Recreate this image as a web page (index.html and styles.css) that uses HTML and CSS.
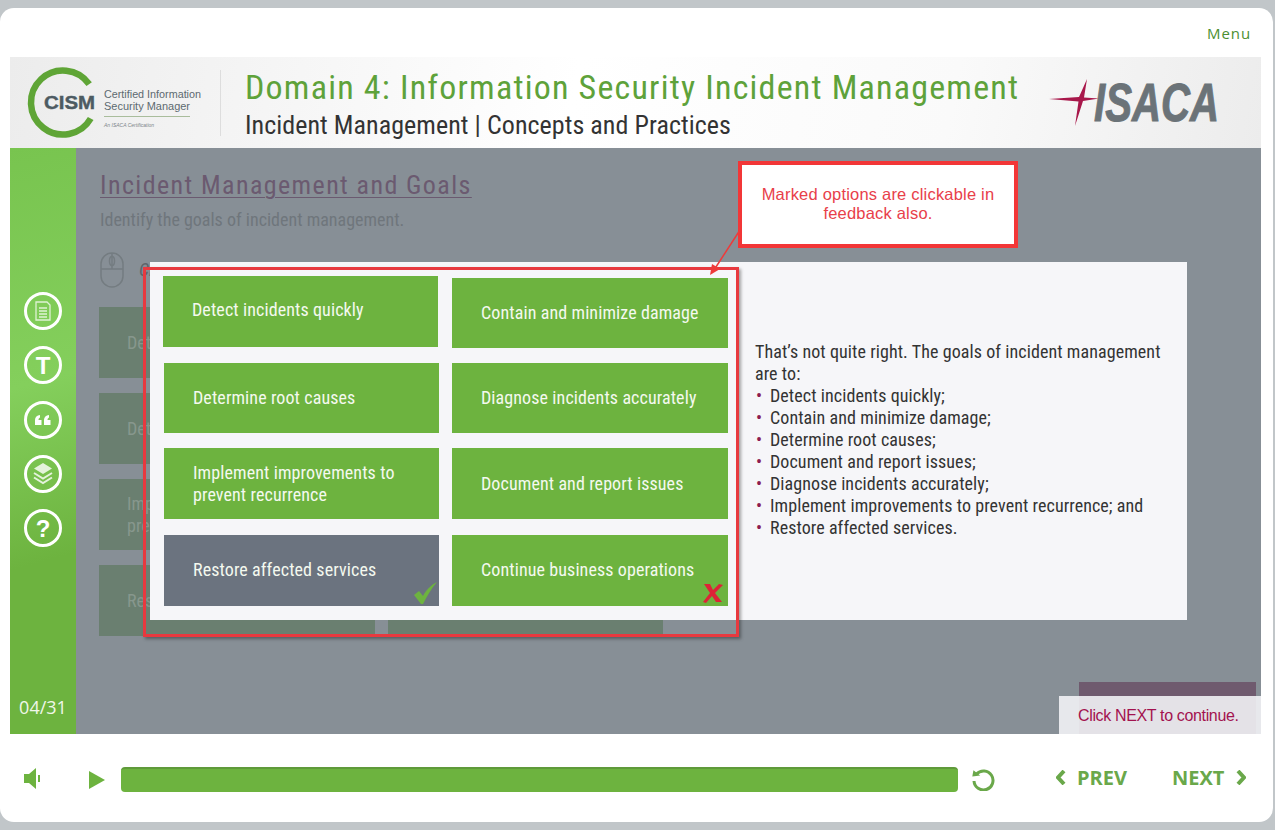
FILE: index.html
```html
<!DOCTYPE html>
<html lang="en">
<head>
    <meta charset="UTF-8">
    <title>Incident Management and Goals</title>
    <link rel="stylesheet" href="styles.css">
</head>
<body>

<div class="player">
    <div class="menu-row"><a class="menu-link">Menu</a></div>

    <header class="banner">
        <svg class="cism-logo" width="184" height="76" viewBox="0 0 184 76">
            <path d="M63.2 19.2 A32 32 0 1 0 64.7 53.5" fill="none" stroke="#5fa536" stroke-width="6.500"/>
            <text x="18" y="43.5" class="cism-mark" textLength="51" lengthAdjust="spacingAndGlyphs">CISM</text>
            <text x="78" y="32.5" class="cism-line" textLength="97" lengthAdjust="spacingAndGlyphs">Certified Information</text>
            <text x="78" y="44.5" class="cism-line" textLength="86" lengthAdjust="spacingAndGlyphs">Security Manager</text>
            <line x1="78" y1="51.500" x2="164" y2="51.500" stroke="#a9bd9c" stroke-width="1"/>
            <text x="78" y="62" class="cism-small">An ISACA Certification</text>
        </svg>
        <div class="banner-divider"></div>
        <div class="banner-titles">
            <div class="domain-title">Domain 4: Information Security Incident Management</div>
            <div class="topic-title">Incident Management | Concepts and Practices</div>
        </div>
        <svg class="isaca-logo" width="212" height="52" viewBox="0 0 212 52">
            <path d="M0 22 L30 20 L38 2 L35 20.500 L50 21.500 L34 24 L26 49 L29.500 24.500 Z" fill="#a8174a"/>
            <text x="45" y="44" class="isaca-text" textLength="125" lengthAdjust="spacingAndGlyphs">ISACA</text>
        </svg>
    </header>

    <section class="slide">
        <aside class="sidebar">
            <div class="side-icons">
                <svg class="side-icon" viewBox="0 0 40 40">
                    <circle cx="20" cy="20" r="17.5" class="ring"/>
                    <path d="M13 11 H24 L27 14 V29 H13 Z M16 17 H24 M16 20 H24 M16 23 H24 M16 26 H24" fill="none" stroke="#fff" stroke-width="1.3" opacity="0.75"/>
                </svg>
                <svg class="side-icon" viewBox="0 0 40 40">
                    <circle cx="20" cy="20" r="17.5" class="ring"/>
                    <text x="20" y="28.500" class="side-letter">T</text>
                </svg>
                <svg class="side-icon" viewBox="0 0 40 40">
                    <circle cx="20" cy="20" r="17.5" class="ring"/>
                    <path d="M12 25 V20 C12 17 14 15.500 17 15 V17.500 C16 18 15.500 18.500 15.500 20 H18.500 V25 Z M21 25 V20 C21 17 23 15.500 26 15 V17.500 C25 18 24.500 18.500 24.500 20 H27.500 V25 Z" fill="#fff"/>
                </svg>
                <svg class="side-icon" viewBox="0 0 40 40">
                    <circle cx="20" cy="20" r="17.5" class="ring"/>
                    <path d="M20 9 L29 14.500 L20 20 L11 14.500 Z" fill="#fff" opacity="0.8"/>
                    <path d="M11 19 L20 24.500 L29 19 M11 23.500 L20 29 L29 23.500" fill="none" stroke="#fff" stroke-width="2" opacity="0.8"/>
                </svg>
                <svg class="side-icon" viewBox="0 0 40 40">
                    <circle cx="20" cy="20" r="17.5" class="ring"/>
                    <text x="20" y="28.500" class="side-letter">?</text>
                </svg>
            </div>
            <div class="page-count">04/31</div>
        </aside>

        <main class="content">
            <h1 class="slide-title">Incident Management and Goals</h1>
            <p class="slide-desc">Identify the goals of incident management.</p>
            <div class="instruction">
                <svg width="26" height="38" viewBox="0 0 26 38">
                    <rect x="2" y="2" width="22" height="34" rx="11" fill="none" stroke="#747c81" stroke-width="1.500"/>
                    <path d="M2 18 H24 M13 2 V18" fill="none" stroke="#747c81" stroke-width="1.500"/>
                    <ellipse cx="13" cy="10" rx="2.500" ry="4.500" fill="none" stroke="#747c81" stroke-width="1.500"/>
                </svg>
                <span class="instruction-text">Click all that apply.</span>
            </div>
            <div class="dim-grid">
                <div class="dim-tile">Detect incidents quickly</div>
                <div class="dim-tile"></div>
                <div class="dim-tile">Determine root causes</div>
                <div class="dim-tile"></div>
                <div class="dim-tile">Implement improvements to prevent recurrence</div>
                <div class="dim-tile"></div>
                <div class="dim-tile">Restore affected services</div>
                <div class="dim-tile"></div>
            </div>
            <div class="submit-btn"></div>
        </main>

        <div class="feedback-panel">
            <div class="tile-grid">
                <div class="tile tile-first">Detect incidents quickly</div>
                <div class="tile">Contain and minimize damage</div>
                <div class="tile">Determine root causes</div>
                <div class="tile">Diagnose incidents accurately</div>
                <div class="tile">Implement improvements to prevent recurrence</div>
                <div class="tile">Document and report issues</div>
                <div class="tile tile-last tile-correct">Restore affected services
                    <svg class="mark mark-tick" width="26" height="24" viewBox="0 0 26 24">
                        <path d="M2 14 L7 10 L11 15 C14 9 19 4 25 1 C19 8 15 15 11 23 H9 Z" fill="#6db33f"/>
                    </svg>
                </div>
                <div class="tile tile-last">Continue business operations
                    <svg class="mark mark-cross" width="22" height="22" viewBox="0 0 22 22">
                        <path d="M2 2 L8 2 L11 8 L17 2 L21 3 L13 11 L20 20 L14 20 L10 14 L4 21 L1 20 L8 11 Z" fill="#dd2337"/>
                    </svg>
                </div>
            </div>
            <div class="feedback-text">
                <p>That’s not quite right. The goals of incident management are to:</p>
                <ul>
                    <li>Detect incidents quickly;</li>
                    <li>Contain and minimize damage;</li>
                    <li>Determine root causes;</li>
                    <li>Document and report issues;</li>
                    <li>Diagnose incidents accurately;</li>
                    <li>Implement improvements to prevent recurrence; and</li>
                    <li>Restore affected services.</li>
                </ul>
            </div>
        </div>

        <div class="red-frame"></div>
        <div class="note-box">Marked options are clickable in feedback also.</div>
        <svg class="note-arrow" width="34" height="48" viewBox="0 0 34 48">
            <path d="M31 2 L5 42" stroke="#ee3a3a" stroke-width="1.500" fill="none"/>
            <path d="M1 47 L3 36 L11 41 Z" fill="#ee3a3a"/>
        </svg>
        <div class="next-hint">Click NEXT to continue.</div>
    </section>

    <footer class="controls">
        <svg class="ctl-speaker" width="17" height="21" viewBox="0 0 17 21">
            <path d="M0 6 H5 L12 0 V21 L5 15 H0 Z" fill="#6db33f"/>
            <rect x="14" y="7" width="2" height="7" fill="#6db33f"/>
        </svg>
        <svg class="ctl-play" width="16" height="18" viewBox="0 0 16 18">
            <path d="M0 0 L16 9 L0 18 Z" fill="#6db33f"/>
        </svg>
        <div class="progress"></div>
        <svg class="ctl-replay" width="24" height="24" viewBox="0 0 24 24">
            <path d="M5.500 7 A9.500 9.500 0 1 1 3 14" fill="none" stroke="#6aa84a" stroke-width="3"/>
            <path d="M1 9 L9 9 L3 3 Z" fill="#6aa84a" transform="rotate(-8 5 7)"/>
        </svg>
        <a class="nav-btn nav-prev">
            <svg width="11" height="15" viewBox="0 0 11 15"><path d="M8 1 L2 7.500 L8 14" fill="none" stroke="#6aa84a" stroke-width="4"/></svg>
            PREV
        </a>
        <a class="nav-btn nav-next">
            NEXT
            <svg width="11" height="15" viewBox="0 0 11 15"><path d="M3 1 L9 7.500 L3 14" fill="none" stroke="#6aa84a" stroke-width="4"/></svg>
        </a>
    </footer>
</div>

</body>
</html>
```

FILE: styles.css
```css
body {
    margin: 0;
    background-color: #c1c6c9;
    font-family: Roboto, "Liberation Sans", Arial, sans-serif;
    font-stretch: 75%;
    overflow: hidden;
}
.player {
    width: 1273px;
    height: 814px;
    margin-top: 8px;
    padding: 0 12px 0 10px;
    box-sizing: border-box;
    background-color: white;
    border-radius: 14px;
}
.menu-row {
    height: 49px;
    display: flex;
    justify-content: flex-end;
    align-items: flex-start;
    padding: 13px 10px 0 0;
    box-sizing: border-box;
}
.menu-link {
    font-family: "Open Sans", sans-serif;
    font-stretch: 100%;
    font-size: 15px;
    letter-spacing: 0.9px;
    color: #4c8f31;
    line-height: 24px;
}

/* banner */
.banner {
    height: 91px;
    display: flex;
    align-items: center;
    background: linear-gradient(100deg, #ececec 0%, #f3f3f3 16%, #ffffff 45%, #fafafa 75%, #ececec 100%);
}
.cism-logo {
    margin-left: 16px;
    flex-shrink: 0;
}
.cism-mark {
    font-family: "Liberation Sans", sans-serif;
    font-weight: bold;
    font-size: 18px;
    fill: #4d5b62;
    stroke: #4d5b62;
    stroke-width: 0.4;
}
.cism-line {
    font-family: "Liberation Sans", sans-serif;
    font-size: 11px;
    fill: #5d6a70;
}
.cism-small {
    font-family: "Liberation Sans", sans-serif;
    font-style: italic;
    font-size: 5px;
    fill: #7b8488;
}
.banner-divider {
    width: 1px;
    height: 66px;
    background-color: #dddddd;
    margin-left: 10px;
}
.banner-titles {
    margin-left: 24px;
    width: 795px;
    padding-top: 4px;
    flex-shrink: 0;
}
.domain-title {
    font-size: 34px;
    letter-spacing: 1.2px;
    color: #5ea23a;
    line-height: 38px;
    white-space: nowrap;
}
.topic-title {
    margin-top: 2px;
    font-size: 26px;
    color: #333333;
    line-height: 34px;
    letter-spacing: 0.05px;
    white-space: nowrap;
}
.isaca-logo {
    flex-shrink: 0;
    margin: 0 -36px 0 9px;
}
.isaca-text {
    font-family: "Liberation Sans", sans-serif;
    font-weight: bold;
    font-style: italic;
    font-size: 53px;
    fill: #6b7378;
    stroke: #6b7378;
    stroke-width: 1;
}

/* slide */
.slide {
    position: relative;
    height: 586px;
    display: flex;
    background-color: #878f96;
}
.sidebar {
    width: 66px;
    flex-shrink: 0;
    display: flex;
    flex-direction: column;
    align-items: center;
    background: linear-gradient(165deg, #78c44f 0%, #84cf5c 40%, #6db33f 70%, #6db33f 100%);
}
.side-icons {
    margin-top: 143px;
    display: flex;
    flex-direction: column;
    gap: 14.250px;
}
.side-icon {
    display: block;
    width: 40px;
    height: 40px;
}
.ring {
    fill: none;
    stroke: #ffffff;
    stroke-width: 3;
}
.side-letter {
    font-family: "Liberation Sans", sans-serif;
    font-weight: bold;
    font-size: 24px;
    fill: #ffffff;
    text-anchor: middle;
}
.page-count {
    margin-top: auto;
    margin-bottom: 15px;
    font-family: "Open Sans", sans-serif;
    font-stretch: 100%;
    font-size: 18px;
    line-height: 24px;
    color: #f0f7ea;
}
.content {
    flex: 1;
    display: flex;
    flex-direction: column;
    padding: 21px 0 0 24px;
}
.slide-title {
    margin: 0;
    font-size: 26px;
    font-weight: normal;
    letter-spacing: 1.4px;
    line-height: 32px;
    color: #6b5a70;
    text-decoration: underline;
    text-decoration-thickness: 1px;
    text-underline-offset: 3px;
    align-self: flex-start;
}
.slide-desc {
    margin: 7px 0 0 0;
    font-size: 18px;
    line-height: 24px;
    color: #6f767c;
}
.instruction {
    display: flex;
    align-items: flex-start;
    gap: 14px;
    margin-top: 19px;
    margin-left: -1px;
    height: 38px;
    font-size: 18px;
    font-style: italic;
    color: #5d646a;
}
.instruction-text {
    margin-top: 8px;
}
.dim-grid {
    display: grid;
    grid-template-columns: 276px 275px;
    grid-auto-rows: 71px;
    column-gap: 13px;
    row-gap: 15px;
    margin-top: 18px;
    margin-left: -1px;
}
.dim-tile {
    display: flex;
    align-items: center;
    padding-left: 28px;
    padding-right: 40px;
    font-size: 18px;
    line-height: 22px;
    color: #87978d;
    background-color: #6a7f70;
}
.submit-btn {
    margin-top: auto;
    align-self: flex-end;
    margin-right: 5px;
    width: 177px;
    height: 52px;
    background-color: #6f5a6e;
}

/* feedback laid over the slide */
.feedback-panel {
    position: absolute;
    left: 140px;
    top: 114px;
    width: 1037px;
    height: 358px;
    display: flex;
    background-color: #f6f6f9;
}
.tile-grid {
    display: grid;
    grid-template-columns: 275px 276px;
    grid-template-rows: 70px 70px 71px 72px;
    column-gap: 13px;
    row-gap: 15px;
    padding: 16px 0 0 14px;
}
.tile {
    position: relative;
    display: flex;
    align-items: center;
    padding: 0 8px 0 29px;
    font-size: 18px;
    line-height: 22px;
    letter-spacing: 0.1px;
    color: #f4f9ef;
    background-color: #6db33f;
}
.tile-first {
    margin: -2px 1px 1px -1px;
    padding-bottom: 3px;
}
.tile-last {
    margin-top: 1px;
    padding-bottom: 2px;
}
.tile-correct {
    background-color: #6b737f;
}
.mark {
    position: absolute;
}
.mark-tick {
    right: 1px;
    bottom: 1px;
}
.mark-cross {
    right: 4px;
    bottom: 2px;
}
.feedback-text {
    margin-left: 27px;
    align-self: center;
    width: 420px;
    font-size: 18px;
    line-height: 22px;
    letter-spacing: 0.08px;
    color: #333333;
    padding-bottom: 2px;
}
.feedback-text p {
    margin: 0;
}
.feedback-text ul {
    margin: 0;
    padding: 0;
    list-style: none;
}
.feedback-text li {
    padding-left: 15px;
    position: relative;
}
.feedback-text li::before {
    content: "•";
    position: absolute;
    left: 1px;
    color: #8c1d50;
}
.red-frame {
    position: absolute;
    left: 133px;
    top: 119px;
    width: 596px;
    height: 370px;
    box-sizing: border-box;
    border: 3px solid #e8393f;
    box-shadow: 2px 2px 3px rgba(0, 0, 0, 0.35);
}
.note-box {
    position: absolute;
    left: 728px;
    top: 13px;
    width: 280px;
    height: 87px;
    box-sizing: border-box;
    border: 4px solid #f23637;
    background-color: white;
    padding: 20px 10px 0;
    font-family: "Liberation Sans", sans-serif;
    font-stretch: 100%;
    font-size: 16.500px;
    letter-spacing: 0.2px;
    line-height: 19px;
    text-align: center;
    color: #e8404a;
}
.note-arrow {
    position: absolute;
    left: 699px;
    top: 80px;
}
.next-hint {
    position: absolute;
    right: 0;
    bottom: 0;
    width: 202px;
    height: 38px;
    box-sizing: border-box;
    padding-left: 19px;
    background-color: rgba(245, 245, 248, 0.88);
    font-family: "Liberation Sans", sans-serif;
    font-size: 16px;
    letter-spacing: -0.35px;
    line-height: 40px;
    color: #a3124f;
}

/* bottom controls */
.controls {
    height: 88px;
    display: flex;
    align-items: center;
}
.ctl-speaker {
    margin-left: 14px;
}
.ctl-play {
    margin-left: 48px;
    margin-top: 3px;
}
.progress {
    width: 837px;
    height: 25px;
    margin-left: 16px;
    margin-top: 2px;
    box-sizing: border-box;
    background-color: #6db33f;
    border-top: 2px solid #5f9a3a;
    border-radius: 4px;
}
.ctl-replay {
    margin-left: 13px;
    margin-top: 2px;
}
.nav-btn {
    display: flex;
    align-items: center;
    font-family: "Open Sans", sans-serif;
    font-weight: bold;
    font-stretch: 100%;
    font-size: 20px;
    color: #6aa84a;
    margin-top: -2px;
}
.nav-prev {
    margin-left: 61px;
    gap: 10px;
}
.nav-next {
    margin-left: 45px;
    gap: 11px;
}
```
